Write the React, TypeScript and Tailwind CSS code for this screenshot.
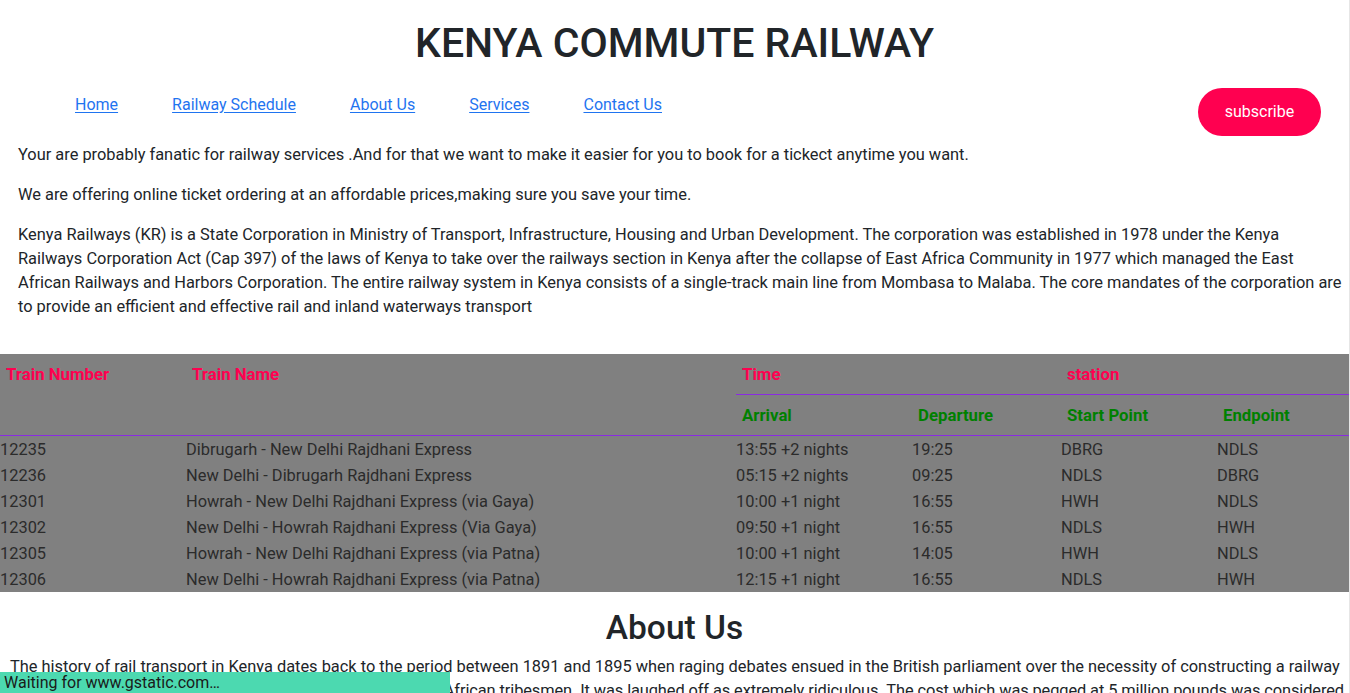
import React from "react";

const rows = [
  ["12235", "Dibrugarh - New Delhi Rajdhani Express", "13:55 +2 nights", "19:25", "DBRG", "NDLS"],
  ["12236", "New Delhi - Dibrugarh Rajdhani Express", "05:15 +2 nights", "09:25", "NDLS", "DBRG"],
  ["12301", "Howrah - New Delhi Rajdhani Express (via Gaya)", "10:00 +1 night", "16:55", "HWH", "NDLS"],
  ["12302", "New Delhi - Howrah Rajdhani Express (Via Gaya)", "09:50 +1 night", "16:55", "NDLS", "HWH"],
  ["12305", "Howrah - New Delhi Rajdhani Express (via Patna)", "10:00 +1 night", "14:05", "HWH", "NDLS"],
  ["12306", "New Delhi - Howrah Rajdhani Express (via Patna)", "12:15 +1 night", "16:55", "NDLS", "HWH"],
];

const links = ["Home", "Railway Schedule", "About Us", "Services", "Contact Us"];

export default function App() {
  return (
    <div
      className="w-[1349px] min-h-[693px] bg-white text-[#212529] text-[16.4px] leading-[24px]"
      style={{ fontFamily: "Roboto, 'Open Sans', sans-serif" }}
    >
      <h1 className="pt-[19px] text-center text-[41px] leading-[48px] font-medium text-[#212529]">
        KENYA COMMUTE RAILWAY
      </h1>

      <div className="mt-[21px] flex items-start justify-between pr-[28px]">
        <ul className="flex pl-[75px] pt-[5px] gap-[54px] text-[16px]">
          {links.map((l) => (
            <li key={l}>
              <a href="#" className="text-[#1f74f0] underline underline-offset-2">
                {l}
              </a>
            </li>
          ))}
        </ul>
        <button className="h-[48px] w-[123px] rounded-full bg-[#ff0050] text-white text-[16px]">
          subscribe
        </button>
      </div>

      <div className="mt-[7px] px-[18px]">
        <p>
          Your are probably fanatic for railway services .And for that we want to make it easier for you to book for a tickect anytime you want.
        </p>
        <p className="mt-[16px]">
          We are offering online ticket ordering at an affordable prices,making sure you save your time.
        </p>
        <p className="mt-[16px] whitespace-nowrap">
          Kenya Railways (KR) is a State Corporation in Ministry of Transport, Infrastructure, Housing and Urban Development. The corporation was established in 1978 under the Kenya
          <br />
          Railways Corporation Act (Cap 397) of the laws of Kenya to take over the railways section in Kenya after the collapse of East Africa Community in 1977 which managed the East
          <br />
          African Railways and Harbors Corporation. The entire railway system in Kenya consists of a single-track main line from Mombasa to Malaba. The core mandates of the corporation are
          <br />
          to provide an efficient and effective rail and inland waterways transport
        </p>
      </div>

      <table className="mt-[35px] w-[1349px] table-fixed border-collapse bg-[#808080] text-[#2b2b2b]">
        <colgroup>
          <col className="w-[186px]" />
          <col className="w-[550px]" />
          <col className="w-[176px]" />
          <col className="w-[149px]" />
          <col className="w-[156px]" />
          <col className="w-[132px]" />
        </colgroup>
        <thead className="border-b border-[#8a2be2] text-[16.8px]">
          <tr>
            <th rowSpan={2} className="px-[6px] pt-[8px] text-left align-top font-bold text-[#ff0050]">
              Train Number
            </th>
            <th rowSpan={2} className="px-[6px] pt-[8px] text-left align-top font-bold text-[#ff0050]">
              Train Name
            </th>
            <th colSpan={2} className="border-b border-[#8a2be2] px-[6px] pt-[8px] pb-[8px] text-left align-top font-bold text-[#ff0050]">
              Time
            </th>
            <th colSpan={2} className="border-b border-[#8a2be2] px-[6px] pt-[8px] pb-[8px] text-left align-top font-bold text-[#ff0050]">
              station
            </th>
          </tr>
          <tr>
            <th className="px-[6px] pt-[8px] pb-[8px] text-left font-bold text-[#008000]">Arrival</th>
            <th className="px-[6px] pt-[8px] pb-[8px] text-left font-bold text-[#008000]">Departure</th>
            <th className="px-[6px] pt-[8px] pb-[8px] text-left font-bold text-[#008000]">Start Point</th>
            <th className="px-[6px] pt-[8px] pb-[8px] text-left font-bold text-[#008000]">Endpoint</th>
          </tr>
        </thead>
        <tbody>
          {rows.map((r) => (
            <tr key={r[0]} className="h-[26px]">
              {r.map((c, i) => (
                <td key={i} className="p-0 pt-[1px] leading-[25px] whitespace-nowrap">
                  {c}
                </td>
              ))}
            </tr>
          ))}
        </tbody>
      </table>

      <h2 className="mt-[17px] text-center text-[33.5px] leading-[38px] font-medium text-[#212529]">About Us</h2>
      <p className="mt-[8px] px-[10px] whitespace-nowrap">
        The history of rail transport in Kenya dates back to the period between 1891 and 1895 when raging debates ensued in the British parliament over the necessity of constructing a railway
        <br />
        <span className="tracking-[-0.1px]">
          from Mombasa to Uganda, a project labelled Lunatic Line by African tribesmen. It was laughed off as extremely ridiculous. The cost which was pegged at 5 million pounds was considered
        </span>
        <br />
        too high for a line that would pass through wild and unexplored country.
      </p>

      <div className="fixed bottom-0 left-0 h-[21px] w-[450px] bg-[#4cd9b0] pl-[4px] text-[16px] leading-[21px] text-[#1a1a1a]">
        Waiting for www.gstatic.com…
      </div>
      <div className="fixed right-0 top-0 h-full w-[1px] bg-[#e6e6e6]" />
    </div>
  );
}
